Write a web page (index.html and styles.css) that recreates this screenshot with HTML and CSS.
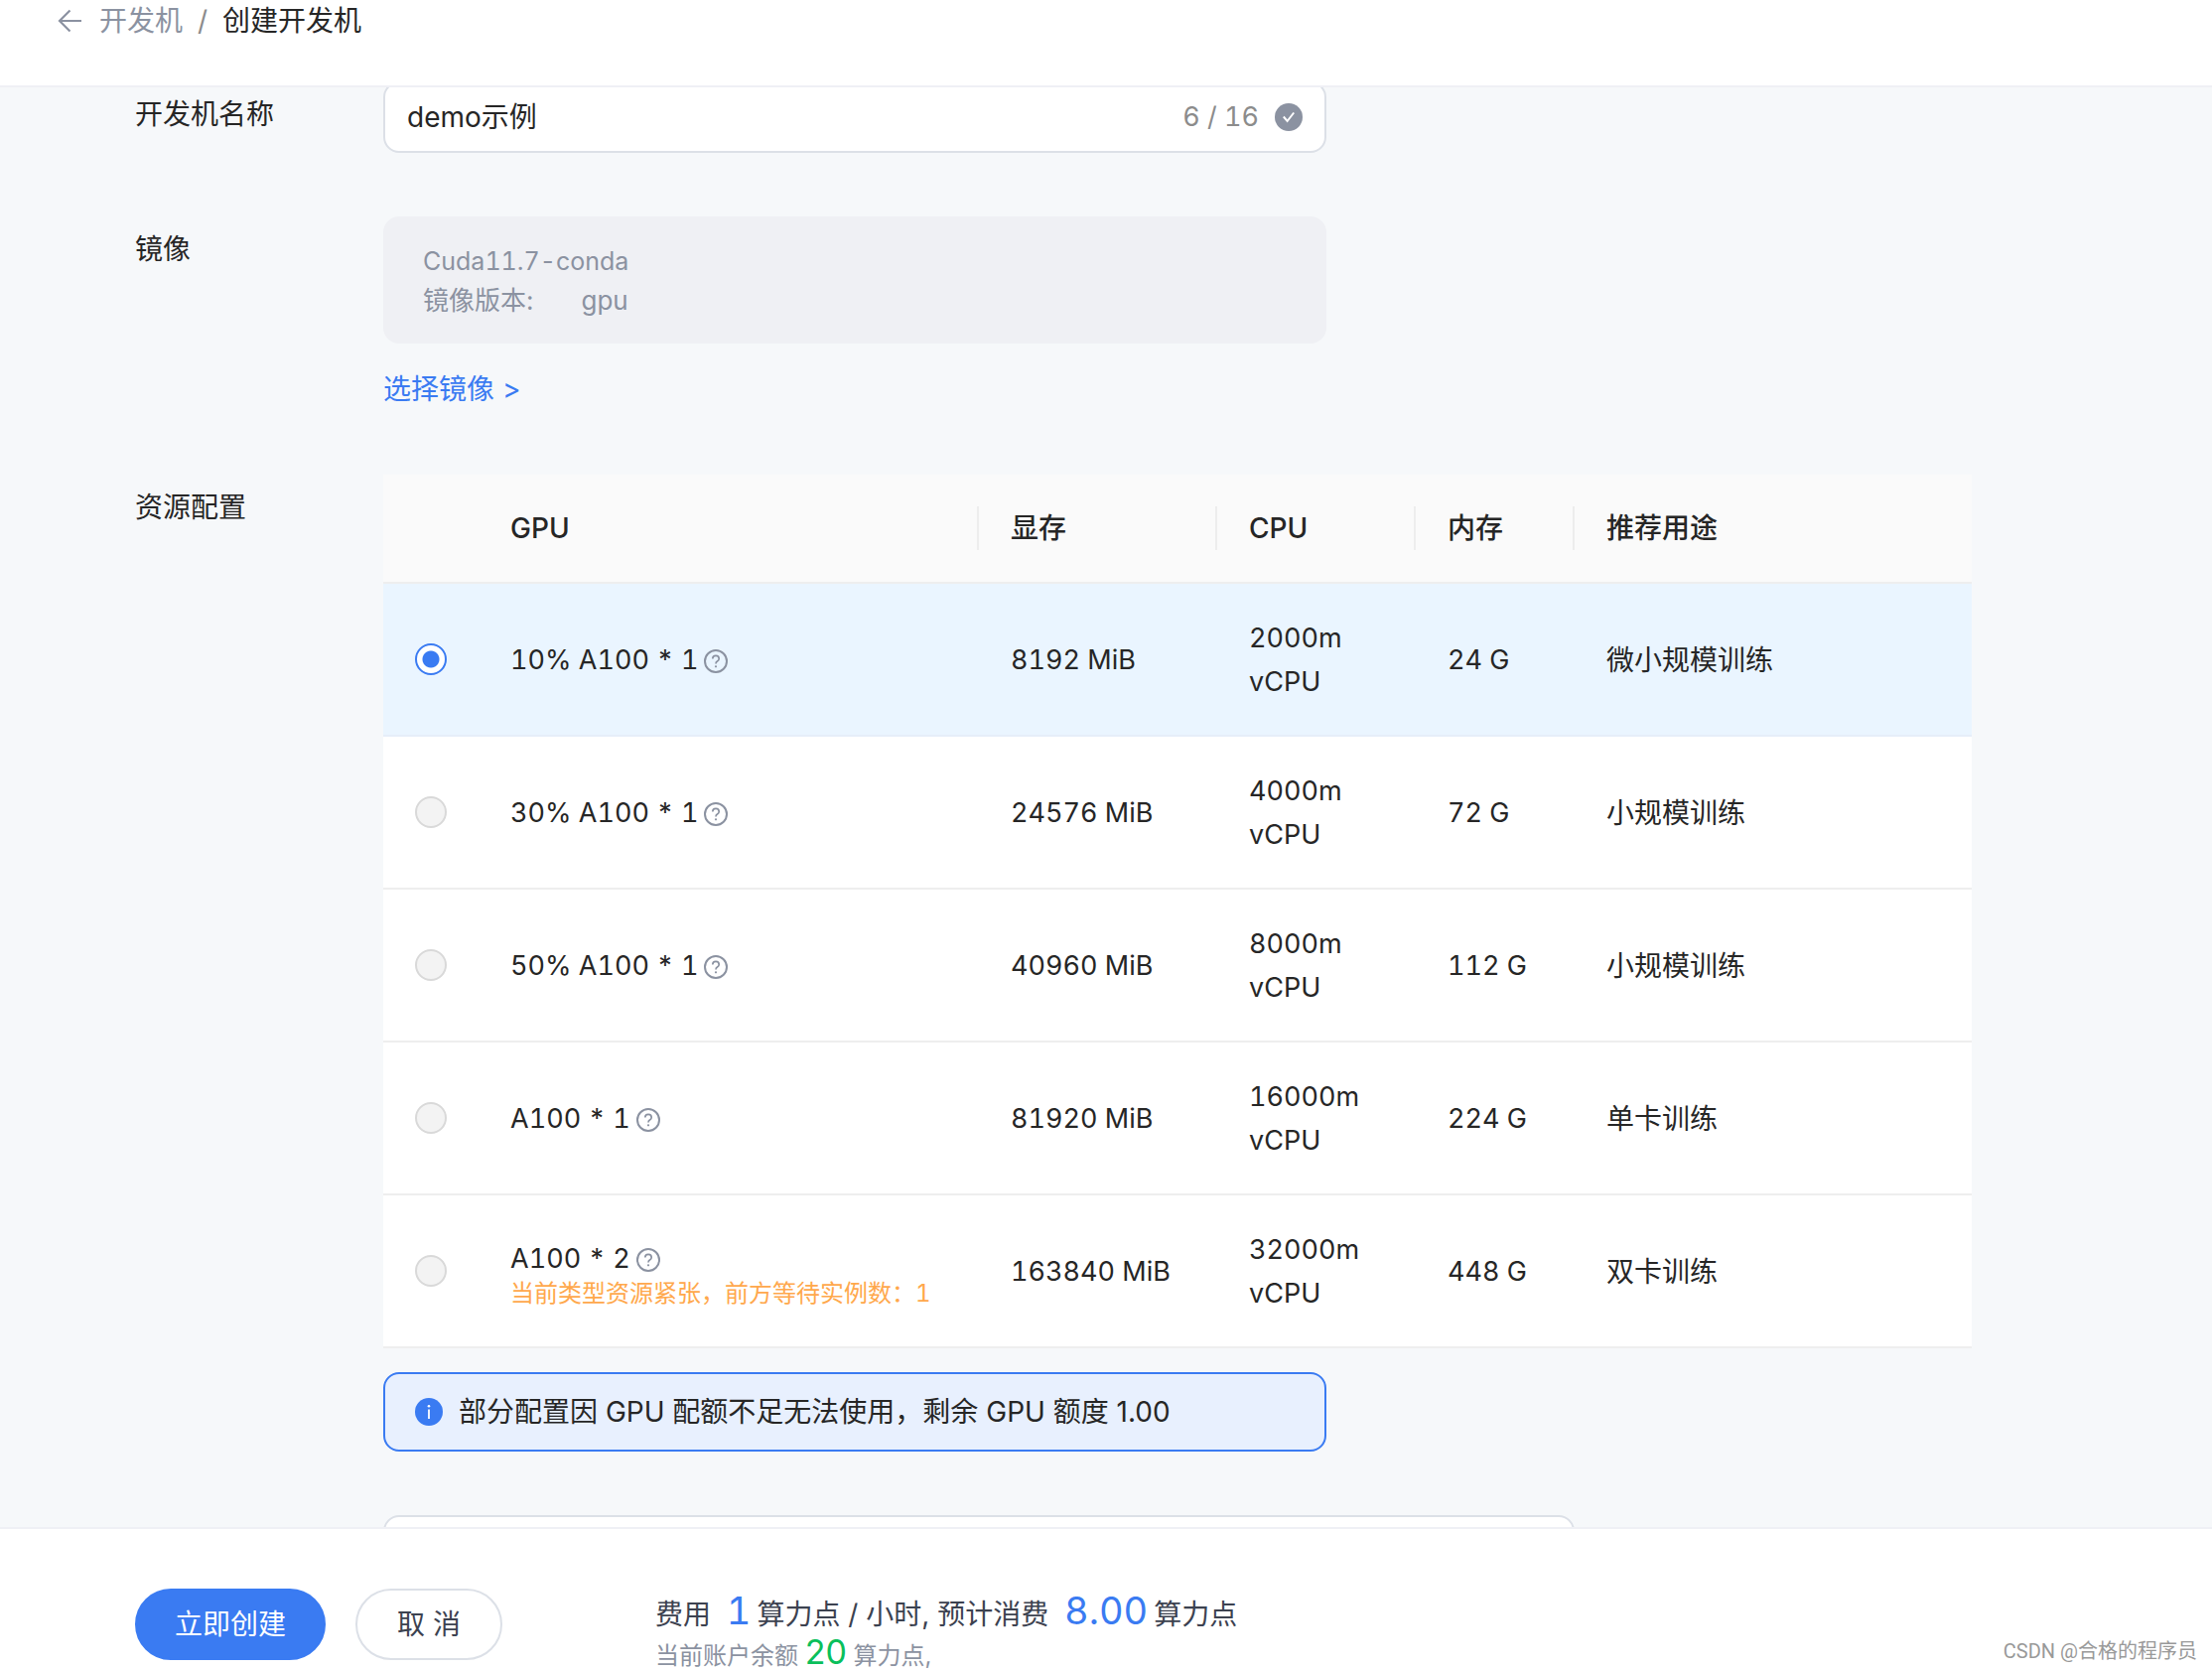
FILE: index.html
```html
<!DOCTYPE html>
<html lang="zh-CN">
<head>
<meta charset="utf-8">
<meta name="viewport" content="width=device-width, initial-scale=1">
<title>创建开发机</title>
<link rel="stylesheet" href="styles.css">
</head>
<body>
<svg class="sprite" aria-hidden="true">
  <symbol id="icon-help" viewBox="0 0 24 24">
    <circle cx="12" cy="12" r="11" fill="none" stroke="currentColor" stroke-width="2"/>
    <path d="M8.8 9.6c0-1.9 1.4-3.2 3.2-3.2s3.2 1.3 3.2 3c0 1.3-.7 2-1.7 2.6-1 .6-1.5 1.1-1.5 2.4" fill="none" stroke="currentColor" stroke-width="1.7"/>
    <circle cx="12" cy="17.3" r="1.1" fill="currentColor"/>
  </symbol>
</svg>

<header class="topbar">
  <nav class="breadcrumb" aria-label="面包屑">
    <a class="back" href="#" aria-label="返回">
      <svg width="24" height="24" viewBox="0 0 24 24"><path d="M24 12H2M12.5 1.5L2 12l10.500 10.500" fill="none" stroke="currentColor" stroke-width="2.200"/></svg>
    </a>
    <a class="crumb" href="#">开发机</a>
    <span class="slash">/</span>
    <span class="current">创建开发机</span>
  </nav>
</header>

<main class="content">
  <form class="form" id="create-form">
    <div class="row">
      <label class="label" for="name">开发机名称</label>
      <div class="field">
        <div class="textbox">
          <input id="name" type="text" maxlength="16" value="demo示例">
          <span class="count">6 / 16</span>
          <svg class="check" width="28" height="28" viewBox="0 0 28 28" aria-hidden="true"><circle cx="14" cy="14" r="14"/><path d="M8.800 13.500l3.800 4.500 6.600-8.500" fill="none" stroke="#fff" stroke-width="2"/></svg>
        </div>
      </div>
    </div>

    <div class="row">
      <div class="label">镜像</div>
      <div class="field">
        <div class="image-card">
          <div class="image-name">Cuda11.7-conda</div>
          <div class="version"><span>镜像版本:</span><span>gpu</span></div>
        </div>
        <a class="pick" href="#">选择镜像 &gt;</a>
      </div>
    </div>

    <div class="row">
      <div class="label">资源配置</div>
      <div class="field">
        <table class="specs">
          <colgroup><col class="c-radio"><col class="c-gpu"><col class="c-vram"><col class="c-cpu"><col class="c-mem"><col></colgroup>
          <thead>
            <tr><th></th><th><div class="split">GPU</div></th><th><div class="split">显存</div></th><th><div class="split">CPU</div></th><th><div class="split">内存</div></th><th>推荐用途</th></tr>
          </thead>
          <tbody>
            <tr class="selected">
              <td class="pickcell"><input type="radio" name="spec" aria-label="10% A100 * 1" checked></td>
              <td><span class="gpu">10% A100 * 1<svg class="help"><use href="#icon-help"/></svg></span></td>
              <td class="num">8192 MiB</td><td class="num">2000m vCPU</td><td class="num">24 G</td><td>微小规模训练</td>
            </tr>
            <tr>
              <td class="pickcell"><input type="radio" name="spec" aria-label="30% A100 * 1" disabled></td>
              <td><span class="gpu">30% A100 * 1<svg class="help"><use href="#icon-help"/></svg></span></td>
              <td class="num">24576 MiB</td><td class="num">4000m vCPU</td><td class="num">72 G</td><td>小规模训练</td>
            </tr>
            <tr>
              <td class="pickcell"><input type="radio" name="spec" aria-label="50% A100 * 1" disabled></td>
              <td><span class="gpu">50% A100 * 1<svg class="help"><use href="#icon-help"/></svg></span></td>
              <td class="num">40960 MiB</td><td class="num">8000m vCPU</td><td class="num">112 G</td><td>小规模训练</td>
            </tr>
            <tr>
              <td class="pickcell"><input type="radio" name="spec" aria-label="A100 * 1" disabled></td>
              <td><span class="gpu">A100 * 1<svg class="help"><use href="#icon-help"/></svg></span></td>
              <td class="num">81920 MiB</td><td class="num">16000m vCPU</td><td class="num">224 G</td><td>单卡训练</td>
            </tr>
            <tr>
              <td class="pickcell"><input type="radio" name="spec" aria-label="A100 * 2" disabled></td>
              <td><span class="gpu">A100 * 2<svg class="help"><use href="#icon-help"/></svg></span><div class="queue">当前类型资源紧张，前方等待实例数：1</div></td>
              <td class="num">163840 MiB</td><td class="num">32000m vCPU</td><td class="num">448 G</td><td>双卡训练</td>
            </tr>
          </tbody>
        </table>
        <div class="alert" role="status">
          <svg width="28" height="28" viewBox="0 0 28 28" aria-hidden="true"><circle cx="14" cy="14" r="14" fill="#3a7bf2"/><path d="M14 11.500V21" stroke="#fff" stroke-width="1.800"/><circle cx="14" cy="8.200" r="1.300" fill="#fff"/></svg>
          <span>部分配置因 GPU 配额不足无法使用，剩余 GPU 额度 1.00</span>
        </div>
      </div>
    </div>

    <div class="row">
      <div></div>
      <div class="panel"></div>
    </div>
  </form>
</main>

<footer class="actions">
  <button class="btn primary" type="submit" form="create-form">立即创建</button>
  <button class="btn" type="button">取 消</button>
  <div class="cost">
    <p class="price">费用 <b>1</b>算力点 / 小时, 预计消费 <b>8.00</b>算力点</p>
    <p class="balance">当前账户余额 <b>20</b> 算力点,</p>
  </div>
  <span class="watermark">CSDN @合格的程序员</span>
</footer>
</body>
</html>
```
FILE: styles.css
```css
* { box-sizing: border-box; }

body {
  margin: 0;
  height: 100vh;
  display: flex;
  flex-direction: column;
  overflow: hidden;
  background: #f6f8fa;
  color: #262626;
  font: 28px/44px Inter, "Noto Sans CJK SC", sans-serif;
}

a { color: inherit; text-decoration: none; }
p { margin: 0; }
.sprite { display: none; }

/* Top bar */
.topbar {
  flex: none;
  padding: 0 58px 44px;
  background: #fff;
  border-bottom: 2px solid #eff0f5;
}
.breadcrumb {
  display: flex;
  align-items: center;
  line-height: 42px;
  color: #8b92a1;
}
.back { display: flex; margin-right: 18px; }
.slash { margin: 0 15px; color: #8c8c8c; }
.current { color: #262626; }

/* Form */
.content { flex: 1; min-height: 0; overflow: hidden; }
.form {
  display: flex;
  flex-direction: column;
  gap: 64px;
  margin-top: -6px;
  padding: 0 242px 0 136px;
}
.row { display: grid; grid-template-columns: 250px 1fr; }
.label { line-height: 66px; }
.field { display: flex; flex-direction: column; gap: 24px; }

.textbox {
  display: flex;
  align-items: center;
  gap: 16px;
  width: 100%;
  max-width: 950px;
  height: 72px;
  padding: 0 22px;
  background: #fff;
  border: 2px solid #dce0e7;
  border-radius: 16px;
}
.textbox input {
  flex: 1;
  min-width: 0;
  padding: 0;
  border: 0;
  outline: 0;
  background: none;
  color: inherit;
  font: inherit;
}
.count {
  color: #8c8c8c;
  font-size: 27px;
  font-variant-numeric: tabular-nums;
}
.check { fill: #8b92a1; }

.image-card {
  max-width: 950px;
  padding: 25px 40px 23px;
  border-radius: 16px;
  background: #eff0f4;
  color: #8b92a1;
  font-size: 26px;
  line-height: 40px;
}
.image-name { font-size: 25px; font-variant-numeric: tabular-nums; }
.version { display: flex; gap: 48px; }
.pick { align-self: flex-start; color: #3a7bf2; }

/* Specification table */
.specs {
  width: 100%;
  table-layout: fixed;
  border-collapse: separate;
  border-spacing: 0;
  background: #fff;
}
.c-radio { width: 96px; }
.c-gpu { width: 504px; }
.c-vram { width: 240px; }
.c-cpu { width: 200px; }
.c-mem { width: 160px; }
.specs th,
.specs td {
  padding: 32px;
  border-bottom: 2px solid #eee;
  text-align: left;
  vertical-align: middle;
}
.specs td { padding: 33px 32px 31px; }
.specs th {
  background: #fafafa;
  font-weight: 500;
}
.split { margin-right: -32px; border-right: 2px solid #ededed; }
.specs .selected td { background: #eaf5ff; border-color: #e6eef9; }
.specs .pickcell { padding: 32px; line-height: 0; }
.specs input {
  appearance: none;
  display: block;
  width: 32px;
  height: 32px;
  margin: 0;
  border: 2px solid #d9d9d9;
  border-radius: 50%;
  background: #f3f3f3;
}
.specs input:checked {
  border-color: #3a7bf2;
  background: radial-gradient(circle, #3a7bf2 8px, #fff 9px);
}
.num,
.gpu { font-size: 27px; font-variant-numeric: tabular-nums; }
.gpu {
  display: flex;
  align-items: center;
  gap: 6px;
  font-variant-ligatures: no-contextual;
}
.help { width: 24px; height: 24px; margin-top: 2px; color: #8b92a1; }
.queue {
  color: #ffa84c;
  font-size: 24px;
  font-variant-numeric: tabular-nums;
  line-height: 26px;
  white-space: nowrap;
}

.alert {
  display: flex;
  align-items: center;
  gap: 16px;
  max-width: 950px;
  padding: 16px 30px;
  border: 2px solid #3a7bf2;
  border-radius: 16px;
  background: #e8f0fe;
}
.panel {
  max-width: 1200px;
  height: 96px;
  border: 2px solid #dce0e7;
  border-radius: 16px;
  background: #fff;
}

/* Bottom action bar */
.actions {
  position: relative;
  flex: none;
  display: flex;
  align-items: flex-start;
  padding: 60px 136px 10px;
  background: #fff;
  border-top: 2px solid #eff0f5;
}
.btn {
  height: 72px;
  margin-right: 30px;
  padding: 0 40px;
  border: 2px solid #dce0e7;
  border-radius: 36px;
  background: #fff;
  color: #3c4250;
  font: inherit;
}
.primary { border-color: #3a7bf2; background: #3a7bf2; color: #fff; padding: 0 38px; }
.cost { height: 72px; margin-left: 124px; padding-top: 4px; }
.cost b { font-weight: 400; line-height: 0; }
.price { color: #3c4250; }
.price b {
  margin: 0 6px 0 8px;
  color: #3a7bf2;
  font-size: 38px;
  font-variant-numeric: tabular-nums;
}
.balance { color: #8b92a1; font-size: 24px; line-height: 40px; }
.balance b { color: #0abf5b; font-size: 34px; }
.watermark {
  position: absolute;
  right: 15px;
  bottom: 4px;
  color: #999;
  font: 20px/30px Roboto, "Noto Sans CJK SC", sans-serif;
}
```
